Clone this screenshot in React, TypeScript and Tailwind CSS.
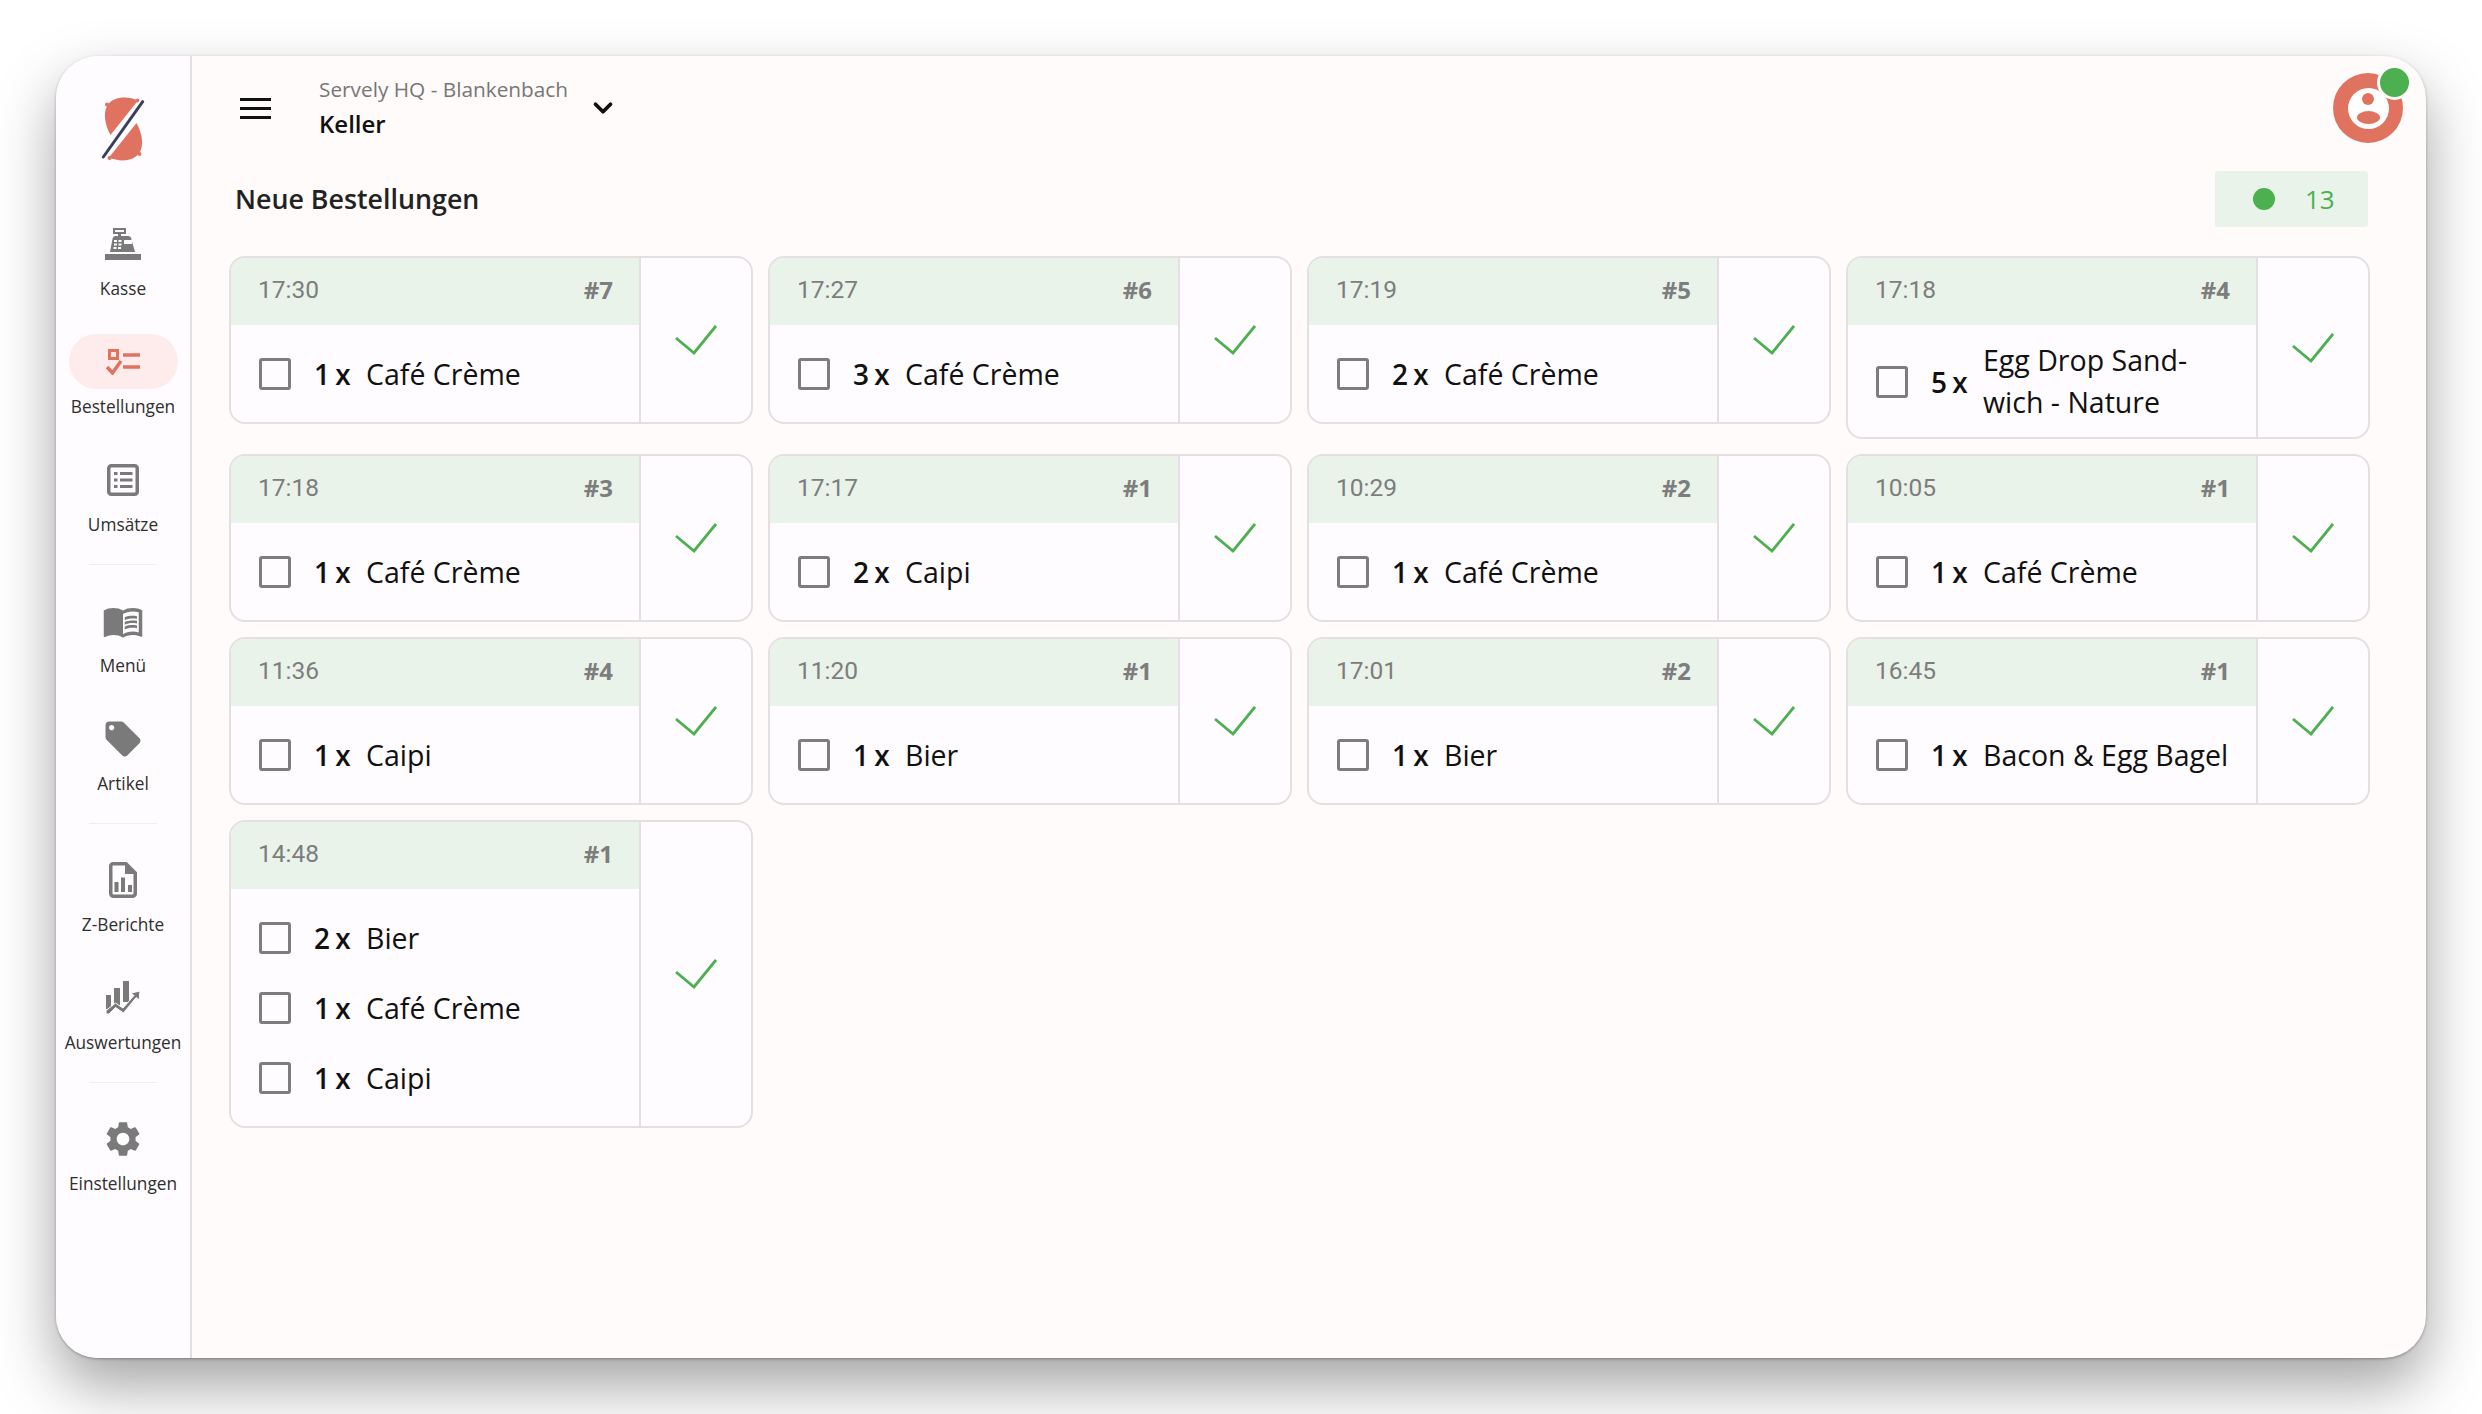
import { ChevronDown } from "lucide-react";
import { MdLocalOffer, MdMenuBook, MdSettings } from "react-icons/md";

type OrderItem = { qty: number; name: string };
type Order = { time: string; no: number; items: OrderItem[] };

const orders: Order[] = [
  { time: "17:30", no: 7, items: [{ qty: 1, name: "Café Crème" }] },
  { time: "17:27", no: 6, items: [{ qty: 3, name: "Café Crème" }] },
  { time: "17:19", no: 5, items: [{ qty: 2, name: "Café Crème" }] },
  { time: "17:18", no: 4, items: [{ qty: 5, name: "Egg Drop Sand\u00ADwich - Nature" }] },
  { time: "17:18", no: 3, items: [{ qty: 1, name: "Café Crème" }] },
  { time: "17:17", no: 1, items: [{ qty: 2, name: "Caipi" }] },
  { time: "10:29", no: 2, items: [{ qty: 1, name: "Café Crème" }] },
  { time: "10:05", no: 1, items: [{ qty: 1, name: "Café Crème" }] },
  { time: "11:36", no: 4, items: [{ qty: 1, name: "Caipi" }] },
  { time: "11:20", no: 1, items: [{ qty: 1, name: "Bier" }] },
  { time: "17:01", no: 2, items: [{ qty: 1, name: "Bier" }] },
  { time: "16:45", no: 1, items: [{ qty: 1, name: "Bacon & Egg Bagel" }] },
  {
    time: "14:48",
    no: 1,
    items: [
      { qty: 2, name: "Bier" },
      { qty: 1, name: "Café Crème" },
      { qty: 1, name: "Caipi" },
    ],
  },
];

function Logo() {
  return (
    <svg width="46" height="66" viewBox="100 95 46 66">
      <path d="M138 99.500C128 95 113 95 107 105C103 113 105 124 110.500 134z" fill="#e0735f" />
      <path d="M109 156.500C119 161 134 161 140 151C144 143 142 132 136.500 122z" fill="#e0735f" />
      <circle cx="107" cy="103.500" r="2" fill="#e0735f" />
      <circle cx="137.500" cy="99.500" r="2" fill="#e0735f" />
      <circle cx="139.500" cy="153" r="2" fill="#e0735f" />
      <circle cx="109.500" cy="157" r="2" fill="#e0735f" />
      <line x1="142.700" y1="100.700" x2="103.300" y2="156" stroke="#fefcfe" strokeWidth="6.500" />
      <line x1="142.700" y1="100.700" x2="103.300" y2="156" stroke="#3c3f5c" strokeWidth="3" strokeLinecap="round" />
    </svg>
  );
}

function KasseIcon() {
  return (
    <svg width="36" height="32" viewBox="0 0 36 32" fill="#7a7a7a">
      <path d="M8 0h13v6h-5v2h7c2 0 3 1 3.2 2.5L30 24H5l2.6-13.5C7.900 9 9 8 10.500 8H13V6H8zM10 2v2h9V2z" fillRule="evenodd" />
      <rect x="0" y="26" width="36" height="6" />
      <g fill="#fefcfe">
        <rect x="9" y="12" width="3" height="2" />
        <rect x="13.500" y="12" width="3" height="2" />
        <rect x="9" y="15.500" width="3" height="2" />
        <rect x="13.500" y="15.500" width="3" height="2" />
        <rect x="8.500" y="19" width="3" height="2" />
        <rect x="13" y="19" width="3" height="2" />
        <rect x="19" y="12" width="8" height="4" rx="0.5" />
      </g>
    </svg>
  );
}

function OrdersIcon() {
  return (
    <svg width="34" height="26" viewBox="0 0 34 26" fill="none" stroke="#e0735f">
      <rect x="3.500" y="1.500" width="8" height="8" strokeWidth="3" />
      <line x1="17" y1="6" x2="34" y2="6" strokeWidth="3.500" />
      <polyline points="1,18 6.500,24 15,12" strokeWidth="3.500" />
      <line x1="17" y1="18" x2="34" y2="18" strokeWidth="3.500" />
    </svg>
  );
}

function SalesIcon() {
  return (
    <svg width="32" height="32" viewBox="0 0 32 32" fill="#7a7a7a">
      <rect x="1.750" y="1.750" width="28.500" height="28.500" rx="2.500" fill="none" stroke="#7a7a7a" strokeWidth="3.500" />
      <rect x="7" y="8" width="3.500" height="3" />
      <rect x="13" y="8" width="12.500" height="3" />
      <rect x="7" y="14.500" width="3.500" height="3" />
      <rect x="13" y="14.500" width="12.500" height="3" />
      <rect x="7" y="21" width="3.500" height="3" />
      <rect x="13" y="21" width="12.500" height="3" />
    </svg>
  );
}

function ReportIcon() {
  return (
    <svg width="28" height="36" viewBox="0 0 28 36" fill="#7a7a7a">
      <path d="M4 1.750h13L26.250 11v20.500a2.750 2.750 0 0 1-2.750 2.750H4.500a2.750 2.750 0 0 1-2.750-2.750V4A2.250 2.250 0 0 1 4 1.750z" fill="none" stroke="#7a7a7a" strokeWidth="3.500" />
      <path d="M16 2l10 10H16z" />
      <rect x="5.500" y="20" width="4" height="10" />
      <rect x="12" y="15.500" width="4" height="14.500" />
      <rect x="19" y="23" width="4" height="7" />
    </svg>
  );
}

function StatsIcon() {
  return (
    <svg width="34" height="33" viewBox="0 0 34 33" fill="#7a7a7a">
      <rect x="0" y="14" width="5" height="14" />
      <rect x="8" y="7" width="6" height="17" />
      <rect x="17" y="0" width="6" height="21" />
      <path d="M0 29.500L9.500 22l7.500 5L28 14.500l-3-2.500 9-2-1 9-2.800-2.500L17.500 32l-8-5.500L3 33H0z" stroke="#fefcfe" strokeWidth="1" />
    </svg>
  );
}

function CheckMark() {
  return (
    <svg width="42" height="30" viewBox="0 0 42 30" fill="none" stroke="#4caf50" strokeWidth="2.800">
      <polyline points="1,13 19,28 41,1" />
    </svg>
  );
}

function SideItem({ icon, label, active }: { icon: React.ReactNode; label: string; active?: boolean }) {
  return (
    <div className="flex flex-col items-center">
      <div
        className={`flex h-[55px] w-[109px] items-center justify-center rounded-[28px] ${active ? "bg-[#fdeceb]" : ""}`}
      >
        {icon}
      </div>
      <span className="mt-[7px] text-[17.250px] leading-[22px] text-[#2f2f2f]">{label}</span>
    </div>
  );
}

function SideDivider() {
  return <div className="my-[28px] h-px w-[68px] bg-[#f0edef]" />;
}

function OrderCard({ order }: { order: Order }) {
  return (
    <div className="flex overflow-hidden rounded-[16px] border-2 border-[#e4e0e2] bg-[#fefcfe]">
      <div className="min-w-0 flex-1">
        <div className="flex h-[67px] items-center justify-between bg-[#e9f3e9] pr-[26px] pl-[27px] text-[#7d7d7d]">
          <span className="mb-[2px] font-['Roboto',sans-serif] text-[24.500px]">{order.time}</span>
          <span className="mb-[3px] text-[24px] font-bold">#{order.no}</span>
        </div>
        <div className="pt-[14px] pb-[13px]">
          {order.items.map((item, i) => (
            <div key={i} className="flex min-h-[70px] items-center pr-[20px] pl-[28px] text-[#111]">
              <span className="size-[32px] shrink-0 rounded-[3px] border-[3.500px] border-[#7d7d7d]" />
              <span className="w-[75px] shrink-0 pl-[23px] text-[28px] font-semibold [word-spacing:-2px]">
                {item.qty} x
              </span>
              <span className="pb-px text-[28.500px] leading-[42px]">{item.name}</span>
            </div>
          ))}
        </div>
      </div>
      <div className="flex w-[112px] shrink-0 items-center justify-center border-l-2 border-[#e4e0e2]">
        <CheckMark />
      </div>
    </div>
  );
}

export default function App() {
  return (
    <div className="h-[1414px] overflow-hidden bg-white p-[56px] font-['Open_Sans',sans-serif]">
      <div className="flex h-full overflow-hidden rounded-[42px] bg-[#fefbfa] shadow-[0_28px_60px_rgba(0,0,0,0.36),0_1px_3px_rgba(0,0,0,0.3)]">
        <aside className="flex w-[136px] shrink-0 flex-col items-center border-r-2 border-[#e4e0e2] bg-[#fefcfe] pt-[40px]">
          <Logo />
          <div className="mt-[54px] flex flex-col gap-[34px]">
            <SideItem icon={<KasseIcon />} label="Kasse" />
            <SideItem icon={<OrdersIcon />} label="Bestellungen" active />
            <SideItem icon={<SalesIcon />} label="Umsätze" />
          </div>
          <SideDivider />
          <div className="flex flex-col gap-[34px]">
            <SideItem icon={<MdMenuBook size={42} color="#7a7a7a" />} label="Menü" />
            <SideItem icon={<MdLocalOffer size={42} color="#7a7a7a" />} label="Artikel" />
          </div>
          <SideDivider />
          <div className="flex flex-col gap-[34px]">
            <SideItem icon={<ReportIcon />} label="Z-Berichte" />
            <SideItem icon={<StatsIcon />} label="Auswertungen" />
          </div>
          <SideDivider />
          <SideItem icon={<MdSettings size={42} color="#7a7a7a" />} label="Einstellungen" />
        </aside>

        <main className="min-w-0 flex-1">
          <header className="flex h-[104px] items-center pr-[23px] pl-[48px]">
            <div className="flex w-[31px] flex-col gap-[6px]">
              <span className="h-[3px] bg-[#111]" />
              <span className="h-[3px] bg-[#111]" />
              <span className="h-[3px] bg-[#111]" />
            </div>
            <div className="ml-[48px] -mt-[3px] flex flex-col">
              <span className="text-[20.800px] leading-[34px] text-[#777]">Servely HQ - Blankenbach</span>
              <span className="text-[24px] leading-[36px] font-semibold text-[#111]">Keller</span>
            </div>
            <ChevronDown className="ml-[20px] size-[30px] text-[#111]" strokeWidth={3} />
            <div className="relative ml-auto flex size-[70px] items-center justify-center rounded-full bg-[#e0735f]">
              <div className="relative size-[41px] overflow-hidden rounded-full bg-white">
                <span className="absolute top-[5.500px] left-[14.500px] size-[12px] rounded-full bg-[#e0735f]" />
                <span className="absolute top-[23px] left-[9px] h-[13px] w-[23px] rounded-[50%] bg-[#e0735f]" />
              </div>
              <span className="absolute -top-[8.500px] -right-[8.500px] size-[35px] rounded-full border-[3px] border-[#fefbfa] bg-[#4caf50]" />
            </div>
          </header>

          <div className="mt-[6px] flex h-[66px] items-center justify-between pr-[58px] pl-[43px]">
            <h1 className="text-[26.800px] font-semibold text-[#222]">Neue Bestellungen</h1>
            <div className="flex h-[56px] w-[153px] items-center rounded-[3px] bg-[#e9f3e9] pl-[38px]">
              <span className="size-[22px] rounded-full bg-[#4caf50]" />
              <span className="ml-[30px] text-[26px] text-[#4caf50]">13</span>
            </div>
          </div>

          <div className="mt-[24px] grid grid-cols-4 items-start gap-x-[15px] gap-y-[15px] pr-[56px] pl-[37px]">
            {orders.map((order, i) => (
              <OrderCard key={i} order={order} />
            ))}
          </div>
        </main>
      </div>
    </div>
  );
}
